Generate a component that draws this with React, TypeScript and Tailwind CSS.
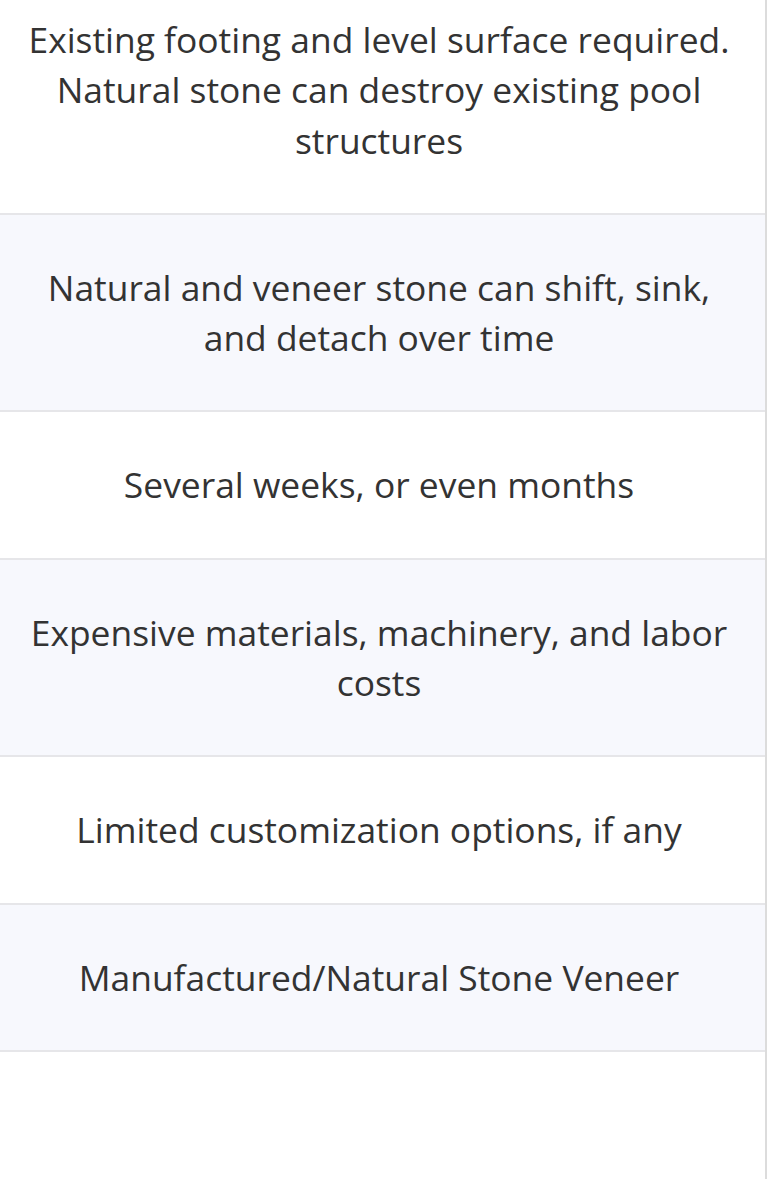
import React from "react";

const rows: { text: string[]; tinted: boolean; first?: boolean }[] = [
  {
    text: ["Existing footing and level surface required.", "Natural stone can destroy existing pool", "structures"],
    tinted: false,
    first: true,
  },
  { text: ["Natural and veneer stone can shift, sink,", "and detach over time"], tinted: true },
  { text: ["Several weeks, or even months"], tinted: false },
  { text: ["Expensive materials, machinery, and labor", "costs"], tinted: true },
  { text: ["Limited customization options, if any"], tinted: false },
  { text: ["Manufactured/Natural Stone Veneer"], tinted: true },
];

export default function App() {
  return (
    <div
      className="w-[768px] h-[1179px] overflow-hidden bg-white"
      style={{ fontFamily: '"Open Sans", "Noto Sans", sans-serif' }}
    >
      <div className="w-[767px] h-full border-r-[2px] border-[#dcdcdc]">
        {rows.map((r, i) => (
          <div
            key={i}
            className={`border-b-[2px] border-[#e6e6e9] flex flex-col items-center text-center text-[35.4px] leading-[50.3px] text-[#333333] pr-[7px] ${
              r.tinted ? "bg-[#f7f8fd]" : "bg-white"
            } ${r.first ? "pt-[14px] pb-[48px]" : "pt-[47px] pb-[48px]"}`}
          >
            {r.text.map((t, j) => (
              <div key={j} className="whitespace-nowrap">
                {t}
              </div>
            ))}
          </div>
        ))}
      </div>
    </div>
  );
}
